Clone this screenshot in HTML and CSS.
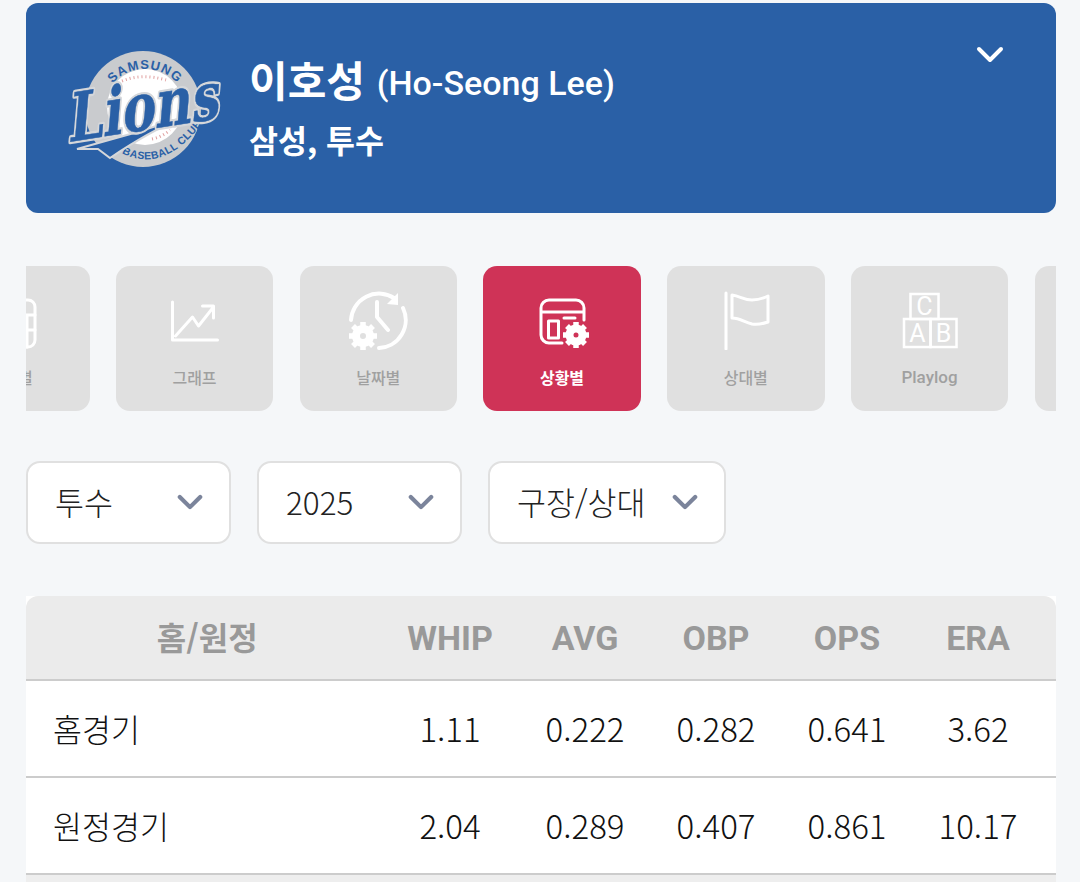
FILE: index.html
```html
<!DOCTYPE html>
<html lang="ko">
<head>
<meta charset="utf-8">
<title>이호성</title>
<link rel="stylesheet" href="styles.css">
</head>
<body>
<main class="page">
  <header class="player">
    <svg class="logo" viewBox="62 45 164 125" aria-label="Samsung Lions">
      <defs>
        <path id="arcTop" d="M101 112a44 44 0 0 1 88 0"/>
        <path id="arcBottom" d="M112 146Q160 180 204 120"/>
        <text id="word" class="logo-word" x="0" y="0" textLength="153" lengthAdjust="spacingAndGlyphs" transform="translate(68 141) rotate(-9) skewX(-14)">Lions</text>
      </defs>
      <circle cx="143" cy="108" r="58" fill="#c9cbce"/>
      <circle cx="145" cy="106" r="38" fill="#fff"/>
      <path class="seam" d="M122 80q20-8 44-1M152 138q10-2 18-9"/>
      <text class="logo-small"><textPath href="#arcTop" startOffset="50%" text-anchor="middle">SAMSUNG</textPath></text>
      <text class="logo-small logo-small-b"><textPath href="#arcBottom" startOffset="54%" text-anchor="middle">BASEBALL CLUB</textPath></text>
      <path d="M77 148Q130 134 182 117Q150 130 110 157L98 148Z" fill="#2a60a6" stroke="#d5d7da" stroke-width="2"/>
      <use href="#word" class="word-outer"/>
      <use href="#word" class="word-inner"/>
    </svg>
    <div class="player-text">
      <h1 class="player-name">이호성 <span class="player-eng">(Ho-Seong Lee)</span></h1>
      <p class="player-team">삼성, 투수</p>
    </div>
    <svg class="collapse" viewBox="0 0 28 18"><path d="M3 3l11 11L25 3"/></svg>
  </header>

  <nav class="tabs">
    <div class="tab-track">
      <a class="tab">
        <svg class="icon" viewBox="0 0 60 60"><rect x="6" y="10" width="48" height="47" rx="7"/><path d="M6 25h48M46 25v32M6 40h48"/></svg>
        <span>경기별</span>
      </a>
      <a class="tab">
        <svg class="icon" viewBox="0 0 60 60"><path d="M7.500 12v38h45M10.500 46l17-19 6 9 15-19M37.500 16h11v12"/></svg>
        <span>그래프</span>
      </a>
      <a class="tab">
        <svg class="icon icon-heavy" viewBox="0 0 60 60">
          <path d="M3 30A28 28 0 0 1 46 8M55 18A28 28 0 0 1 31 58M29 12v15l11 13"/>
          <path class="solid" d="M39 14L50 3V15Z"/>
          <path class="gear-line" d="M15 32v5M15 55v5M1 46h5M24 46h5M5 36l3 3M25 36l-3 3M5 56l3-3M25 56l-3-3"/>
          <circle class="gear" cx="15" cy="46" r="7"/>
        </svg>
        <span>날짜별</span>
      </a>
      <a class="tab active">
        <svg class="icon" viewBox="0 0 60 60">
          <path d="M30 53H17a8 8 0 0 1-8-8V18a8 8 0 0 1 8-8h27a8 8 0 0 1 8 8v12M9 22h43M32 28h11"/>
          <rect x="16.500" y="31" width="10" height="17"/>
          <path class="gear-line" d="M44 32v5M44 53v5M31 45h5M52 45h5M35 36l3 3M53 36l-3 3M35 54l3-3M53 54l-3-3"/>
          <circle class="gear" cx="44" cy="45" r="6.500"/>
        </svg>
        <span>상황별</span>
      </a>
      <a class="tab">
        <svg class="icon" viewBox="0 0 60 60"><path d="M10 3v56M16 5C24 6 28 10 36 10 42 10 48 8 52 6V32C46 34 42 35 36 34 28 32 24 28 16 28Z"/></svg>
        <span>상대별</span>
      </a>
      <a class="tab">
        <svg class="icon icon-blocks" viewBox="0 0 60 60">
          <rect x="10.500" y="4" width="28" height="25"/><rect x="4" y="29" width="26.500" height="28"/><rect x="30.500" y="29" width="26" height="28"/>
          <text class="block-letter" x="24.500" y="25">C</text><text class="block-letter" x="17.500" y="52">A</text><text class="block-letter" x="43.500" y="52">B</text>
        </svg>
        <span class="label-latin">Playlog</span>
      </a>
      <a class="tab"><span>&nbsp;</span></a>
    </div>
  </nav>

  <div class="filters">
    <button class="select select-short">투수<svg class="caret" viewBox="0 0 28 18"><path d="M3 3l11 11L25 3"/></svg></button>
    <button class="select select-short">2025<svg class="caret" viewBox="0 0 28 18"><path d="M3 3l11 11L25 3"/></svg></button>
    <button class="select">구장/상대<svg class="caret" viewBox="0 0 28 18"><path d="M3 3l11 11L25 3"/></svg></button>
  </div>

  <table class="stats">
    <colgroup>
      <col class="col-name"><col class="col-whip"><col class="col-num"><col class="col-num"><col class="col-num"><col class="col-num"><col class="col-end">
    </colgroup>
    <thead>
      <tr><th>홈/원정</th><th>WHIP</th><th>AVG</th><th>OBP</th><th>OPS</th><th>ERA</th><th></th></tr>
    </thead>
    <tbody>
      <tr><td>홈경기</td><td>1.11</td><td>0.222</td><td>0.282</td><td>0.641</td><td>3.62</td><td></td></tr>
      <tr><td>원정경기</td><td>2.04</td><td>0.289</td><td>0.407</td><td>0.861</td><td>10.17</td><td></td></tr>
    </tbody>
    <tfoot>
      <tr><td colspan="7"></td></tr>
    </tfoot>
  </table>
</main>
</body>
</html>
```
FILE: styles.css
```css
* { box-sizing: border-box; }
html, body { margin: 0; height: 882px; overflow: hidden; }
body {
  background: #f5f7f9;
  font-family: "Noto Sans CJK KR", "Noto Sans", sans-serif;
  color: #111;
}
.page { padding: 3px 24px 0 26px; }

.player {
  position: relative;
  display: flex;
  align-items: center;
  gap: 23px;
  height: 210px;
  padding-left: 36px;
  background: #2a60a6;
  border-radius: 12px;
  color: #fff;
}
.logo { width: 164px; height: 125px; flex: none; }
.seam { fill: none; stroke: #e0a0a0; stroke-width: 3; stroke-dasharray: 1 3; }
.logo-small { font: 700 13px "Liberation Sans", sans-serif; fill: #2a60a6; letter-spacing: 1px; }
.logo-small-b { font-size: 10.500px; letter-spacing: .4px; }
.logo-word { font: 700 66px "DejaVu Serif", serif; }
.word-outer { fill: #d5d7da; stroke: #d5d7da; stroke-width: 5; stroke-linejoin: round; }
.word-inner { fill: #2a60a6; stroke: #2a60a6; stroke-width: .5; }
.player-text { margin-bottom: 6px; }
.player-name { margin: 0; font-size: 42px; line-height: 56px; font-weight: 700; }
.player-eng { font-family: "Roboto", sans-serif; font-size: 34px; font-weight: 500; vertical-align: 2px; }
.player-team { margin: 8px 0 0; font-size: 31.500px; line-height: 40px; font-weight: 700; }
.collapse {
  position: absolute;
  right: 52px;
  top: 43px;
  width: 28px;
  height: 18px;
  fill: none;
  stroke: #fff;
  stroke-width: 4;
  stroke-linecap: round;
  stroke-linejoin: round;
}

.tabs { margin-top: 53px; overflow: hidden; }
.tab-track { display: flex; gap: 26.250px; margin-left: -94px; width: 1400px; }
.tab {
  flex: none;
  width: 157.500px;
  height: 145px;
  padding-top: 24px;
  display: flex;
  flex-direction: column;
  align-items: center;
  justify-content: flex-start;
  background: #e0e0e0;
  border-radius: 14px;
  color: #a0a0a0;
  font-size: 16px;
  font-weight: 500;
}
.tab.active { background: #cf3357; color: #fff; font-weight: 700; }
.tab span { line-height: 24px; margin-top: 15px; }
.tab .label-latin { font-family: "Roboto", sans-serif; font-size: 17px; font-weight: 500; }
.icon {
  width: 60px;
  height: 60px;
  fill: none;
  stroke: #fff;
  stroke-width: 3;
  stroke-linecap: round;
  stroke-linejoin: round;
}
.icon-heavy { stroke-width: 4; }
.icon-blocks { stroke-width: 2.500; stroke-linecap: butt; stroke-linejoin: miter; }
.icon .solid { fill: #fff; stroke: none; }
.icon .gear { fill: none; stroke: #fff; stroke-width: 8; }
.icon .gear-line { stroke-width: 5.500; stroke-linecap: butt; }
.icon .block-letter { fill: #fff; stroke: none; font: 400 25px "Roboto", sans-serif; text-anchor: middle; }

.filters { display: flex; gap: 26px; margin-top: 50px; }
.select {
  display: flex;
  align-items: center;
  justify-content: space-between;
  width: 238px;
  height: 83px;
  padding: 0 26px 4px 27px;
  background: #fff;
  border: 2px solid #e0e0e0;
  border-radius: 14px;
  font-family: inherit;
  font-size: 31.500px;
  font-weight: 300;
  color: #222;
}
.select-short { width: 205px; }
.caret {
  width: 26px;
  height: 17px;
  margin-top: 4px;
  fill: none;
  stroke: #7b849b;
  stroke-width: 4.500;
  stroke-linecap: round;
  stroke-linejoin: round;
}

.stats {
  margin-top: 52px;
  width: 1030px;
  table-layout: fixed;
  border-collapse: separate;
  border-spacing: 0;
  background: #fff;
}
.col-name { width: 354.500px; }
.col-whip { width: 139px; }
.col-num { width: 131px; }
.col-end { width: 12.500px; }
.stats th {
  height: 85px;
  padding: 0;
  background: #ebebeb;
  border-bottom: 2px solid #ccc;
  color: #999;
  font-family: "Roboto", "Noto Sans CJK KR", sans-serif;
  font-size: 34px;
  font-weight: 700;
  text-align: center;
}
.stats th:first-child { border-top-left-radius: 12px; padding: 0 0 4px 8px; font-family: "Noto Sans CJK KR", sans-serif; font-size: 32px; }
.stats th:nth-child(7) { border-top-right-radius: 12px; }
.stats td {
  height: 97px;
  border-bottom: 2px solid #ccc;
  font-size: 33px;
  font-weight: 300;
  text-align: center;
  padding: 0 0 2px;
}
.stats tbody td:first-child { text-align: left; padding-left: 27px; font-size: 31.500px; }
.stats tfoot td { height: 60px; background: #eee; border: 0; }
```
